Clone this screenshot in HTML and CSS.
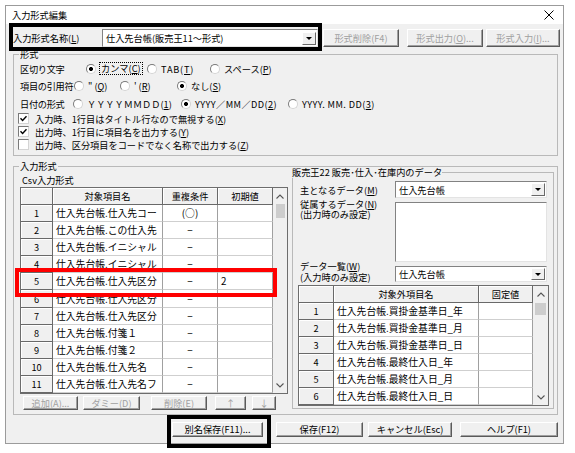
FILE: index.html
```html
<!DOCTYPE html>
<html lang="ja">
<head>
<meta charset="utf-8">
<title>入力形式編集</title>
<link rel="stylesheet" href="styles.css">
</head>
<body>
<div class="window">
  <div class="titlebar">
    <span class="title">入力形式編集</span>
    <svg class="close" width="10" height="10" viewBox="0 0 10 10"><path d="M0.5 0.5L9.5 9.5M9.5 0.5L0.5 9.5" stroke="#000" stroke-width="1" fill="none"/></svg>
  </div>
  <div class="client">
    <div class="toprow">
      <span class="name-lbl">入力形式名称(<u>L</u>)</span>
      <div class="combo main-combo"><span class="combo-text">仕入先台帳(販売王11〜形式)</span><span class="drop"><i class="tri"></i></span></div>
      <button class="btn dis b-del">形式削除(F4)</button>
      <button class="btn dis b-out">形式出力(<u>O</u>)...</button>
      <button class="btn dis b-in">形式入力(<u>I</u>)...</button>
    </div>

    <fieldset class="group g-format">
      <legend>形式</legend>
      <div class="frow r1">
        <span class="flabel w66">区切り文字</span>
        <span class="opt w61"><span class="radio on"></span><span class="focus">カンマ(<u>C</u>)</span></span>
        <span class="opt w63"><span class="radio"></span><span class="wide">TAB(<u>T</u>)</span></span>
        <span class="opt"><span class="radio"></span>スペース(<u>P</u>)</span>
      </div>
      <div class="frow r2">
        <span class="flabel w54">項目の引用符</span>
        <span class="opt w46"><span class="radio"></span>" (<u>Q</u>)</span>
        <span class="opt w57"><span class="radio"></span>' (<u>R</u>)</span>
        <span class="opt"><span class="radio on"></span>なし(<u>S</u>)</span>
      </div>
      <div class="frow r3">
        <span class="flabel w53">日付の形式</span>
        <span class="opt w108"><span class="radio"></span>ＹＹＹＹＭＭＤＤ(<u>1</u>)</span>
        <span class="opt w107"><span class="radio on"></span><span class="wide2">YYYY／MM／DD(<u>2</u>)</span></span>
        <span class="opt"><span class="radio"></span><span class="wide2">YYYY. MM. DD(<u>3</u>)</span></span>
      </div>
      <div class="cbrow"><span class="cb"><svg width="7" height="7" viewBox="0 0 7 7"><path d="M0.5 3.3L2.6 5.4L6.5 1.2" fill="none" stroke="#000" stroke-width="1.4"/></svg></span>入力時、1行目はタイトル行なので無視する(<u>X</u>)</div>
      <div class="cbrow"><span class="cb"><svg width="7" height="7" viewBox="0 0 7 7"><path d="M0.5 3.3L2.6 5.4L6.5 1.2" fill="none" stroke="#000" stroke-width="1.4"/></svg></span>出力時、1行目に項目名を出力する(<u>Y</u>)</div>
      <div class="cbrow last"><span class="cb"></span>出力時、区分項目をコードでなく名称で出力する(<u>Z</u>)</div>
    </fieldset>

    <fieldset class="group g-input">
      <legend>入力形式</legend>
      <div class="lower">
        <div class="leftcol">
          <div class="csv-lbl">Csv入力形式</div>
          <div class="grid lgrid">
            <div class="sb">
              <span class="sb-btn"><svg width="8" height="5" viewBox="0 0 8 5"><path d="M0.5 4.5L4 1L7.5 4.5" fill="none" stroke="#555" stroke-width="1.1"/></svg></span>
              <span class="thumb lthumb"></span>
              <span class="sb-fill"></span>
              <span class="sb-btn"><svg width="8" height="5" viewBox="0 0 8 5"><path d="M0.5 0.5L4 4L7.5 0.5" fill="none" stroke="#555" stroke-width="1.1"/></svg></span>
            </div>
            <div class="hc"></div><div class="hc">対象項目名</div><div class="hc">重複条件</div><div class="hc">初期値</div>
            <div class="rh">1</div><div class="dc">仕入先台帳.仕入先コー</div><div class="dc c">(○)</div><div class="dc"></div>
            <div class="rh">2</div><div class="dc">仕入先台帳.この仕入先</div><div class="dc c">−</div><div class="dc"></div>
            <div class="rh">3</div><div class="dc">仕入先台帳.イニシャル</div><div class="dc c">−</div><div class="dc"></div>
            <div class="rh">4</div><div class="dc">仕入先台帳.イニシャル</div><div class="dc c">−</div><div class="dc"></div>
            <div class="rh">5</div><div class="dc">仕入先台帳.仕入先区分</div><div class="dc c">−</div><div class="dc">2</div>
            <div class="rh">6</div><div class="dc">仕入先台帳.仕入先区分</div><div class="dc c">−</div><div class="dc"></div>
            <div class="rh">7</div><div class="dc">仕入先台帳.仕入先区分</div><div class="dc c">−</div><div class="dc"></div>
            <div class="rh">8</div><div class="dc">仕入先台帳.付箋１</div><div class="dc c">−</div><div class="dc"></div>
            <div class="rh">9</div><div class="dc">仕入先台帳.付箋２</div><div class="dc c">−</div><div class="dc"></div>
            <div class="rh">10</div><div class="dc">仕入先台帳.仕入先名</div><div class="dc c">−</div><div class="dc"></div>
            <div class="rh">11</div><div class="dc">仕入先台帳.仕入先名フ</div><div class="dc c">−</div><div class="dc"></div>
          </div>
          <div class="gbtns">
            <button class="btn dis g1">追加(<u>A</u>)...</button>
            <button class="btn dis g2">ダミー(<u>D</u>)</button>
            <button class="btn dis g3">削除(<u>E</u>)</button>
            <button class="btn dis g4">↑</button>
            <button class="btn dis g5">↓</button>
          </div>
        </div>

        <fieldset class="g-data">
          <legend>販売王22 販売･仕入･在庫内のデータ</legend>
          <div class="rowM">
            <span class="dlbl">主となるデータ(<u>M</u>)</span>
            <div class="combo rcombo"><span class="combo-text">仕入先台帳</span><span class="drop"><i class="tri"></i></span></div>
          </div>
          <div class="rowN">
            <span class="dlbl">従属するデータ(<u>N</u>)<br>(出力時のみ設定)</span>
            <div class="listbox"></div>
          </div>
          <div class="rowW">
            <span class="dlbl">データ一覧(<u>W</u>)<br>(入力時のみ設定)</span>
            <div class="combo rcombo"><span class="combo-text">仕入先台帳</span><span class="drop"><i class="tri"></i></span></div>
          </div>
          <div class="grid rgrid">
            <div class="sb">
              <span class="sb-btn"><svg width="8" height="5" viewBox="0 0 8 5"><path d="M0.5 4.5L4 1L7.5 4.5" fill="none" stroke="#555" stroke-width="1.1"/></svg></span>
              <span class="thumb rthumb"></span>
              <span class="sb-fill"></span>
              <span class="sb-btn"><svg width="8" height="5" viewBox="0 0 8 5"><path d="M0.5 0.5L4 4L7.5 0.5" fill="none" stroke="#555" stroke-width="1.1"/></svg></span>
            </div>
            <div class="hc"></div><div class="hc">対象外項目名</div><div class="hc">固定値</div>
            <div class="rh">1</div><div class="dc">仕入先台帳.買掛金基準日_年</div><div class="dc"></div>
            <div class="rh">2</div><div class="dc">仕入先台帳.買掛金基準日_月</div><div class="dc"></div>
            <div class="rh">3</div><div class="dc">仕入先台帳.買掛金基準日_日</div><div class="dc"></div>
            <div class="rh">4</div><div class="dc">仕入先台帳.最終仕入日_年</div><div class="dc"></div>
            <div class="rh">5</div><div class="dc">仕入先台帳.最終仕入日_月</div><div class="dc"></div>
            <div class="rh">6</div><div class="dc">仕入先台帳.最終仕入日_日</div><div class="dc"></div>
          </div>
        </fieldset>
      </div>
    </fieldset>

    <div class="footer">
      <button class="btn f1">別名保存(F11)...</button>
      <button class="btn f2">保存(F12)</button>
      <button class="btn f3">キャンセル(Esc)</button>
      <button class="btn f4">ヘルプ(F1)</button>
    </div>
  </div>
</div>

<div class="mark m1"></div>
<div class="mark m2"></div>
<div class="mark m3"></div>
</body>
</html>
```

FILE: styles.css
```css
* { box-sizing: border-box; }
html, body { margin: 0; padding: 0; }
body {
  position: relative;
  width: 575px;
  height: 453px;
  overflow: hidden;
  background: #fff;
  font-family: "Noto Sans CJK JP", "Noto Sans", sans-serif;
  font-size: 9.2px;
  color: #000;
}
u { text-decoration: underline; text-underline-offset: 1px; }

.window {
  margin: 5px 0 0 5px;
  width: 559px;
  height: 439px;
  border: 1px solid #9b9b9b;
  display: flex;
  flex-direction: column;
  background: #f0f0f0;
}
.titlebar {
  flex: none;
  height: 18px;
  background: #fff;
  display: flex;
  align-items: center;
  justify-content: space-between;
  padding: 0 9px 0 6px;
  line-height: 18px;
}
.close { display: block; }

.client { flex: 1; display: flex; flex-direction: column; }

.toprow {
  display: flex;
  align-items: center;
  height: 18px;
  margin-top: 5px;
  padding-left: 7px;
}
.name-lbl { width: 89px; flex: none; white-space: nowrap; }

.combo {
  display: flex;
  align-items: center;
  background: #fff;
  border: 1px solid;
  border-color: #828282 #e3e3e3 #e3e3e3 #828282;
  height: 18px;
  flex: none;
}
.main-combo { width: 216px; }
.combo-text { flex: 1; padding-left: 3px; white-space: nowrap; overflow: hidden; }
.drop {
  flex: none;
  width: 14px;
  height: 13px;
  margin-right: 1px;
  background: #f0f0f0;
  border: 1px solid;
  border-color: #fff #696969 #696969 #fff;
  display: flex;
  align-items: center;
  justify-content: center;
}
.tri {
  width: 0;
  height: 0;
  border-left: 3px solid transparent;
  border-right: 3px solid transparent;
  border-top: 3px solid #000;
}

.btn {
  display: block;
  flex: none;
  font: inherit;
  color: #000;
  background: #f0f0f0;
  border: 1px solid;
  border-color: #fff #5a5a5a #5a5a5a #fff;
  box-shadow: inset -1px -1px 0 #a0a0a0;
  padding: 0;
  margin: 0;
  white-space: nowrap;
  overflow: hidden;
  text-align: center;
}
.dis { color: #a0a0a0; }

.toprow .btn { height: 18px; line-height: 16px; }
.b-del { width: 76px; margin-left: 5px; }
.b-out { width: 76px; margin-left: 8px; }
.b-in { width: 74px; margin-left: 3px; }

.group {
  margin: 0 0 0 7px;
  padding: 0;
  border: 1px solid #b9b9b9;
  width: 545px;
  min-width: 0;
}
.group > legend {
  margin-left: 5px;
  padding: 0 1px;
  line-height: 12px;
  height: 12px;
}
.g-format { margin-top: 1px; }

.frow { display: flex; align-items: center; padding-left: 6px; white-space: nowrap; }
.r1 { height: 17px; }
.r2 { height: 18px; }
.r3 { height: 17px; }
.flabel { flex: none; letter-spacing: -0.3px; }
.opt { display: flex; align-items: center; flex: none; white-space: nowrap; }
.wide { letter-spacing: 0.8px; }
.wide2 { letter-spacing: 0.4px; }
.w66 { width: 66px; }
.w61 { width: 61px; }
.w63 { width: 63px; }
.w54 { width: 54px; }
.w46 { width: 46px; }
.w57 { width: 57px; }
.w53 { width: 53px; }
.w108 { width: 108px; }
.w107 { width: 107px; }

.radio {
  flex: none;
  width: 10px;
  height: 10px;
  border-radius: 50%;
  border: 1px solid;
  border-color: #7a7a7a #d4d4d4 #d4d4d4 #7a7a7a;
  background: #fff;
  margin-right: 4px;
}
.radio.on { background: radial-gradient(circle at center, #000 0, #000 1.7px, #fff 2.3px); }
.focus { outline: 1px dotted #000; outline-offset: 0; padding: 0 1px; line-height: 11px; }

.cbrow {
  display: flex;
  align-items: center;
  height: 13px;
  padding-left: 4px;
  white-space: nowrap;
}
.cbrow.last { margin-bottom: 4px; }
.cb {
  flex: none;
  width: 11px;
  height: 11px;
  border: 1px solid;
  border-color: #7a7a7a #d4d4d4 #d4d4d4 #7a7a7a;
  background: #fff;
  margin-right: 6px;
  display: flex;
  align-items: center;
  justify-content: center;
}
.cb svg { display: block; }

.g-input { margin-top: 4px; }

.lower { display: flex; align-items: flex-start; padding: 0 3px 4px 6px; }
.leftcol { width: 268px; margin-right: 4px; flex: none; }
.csv-lbl { margin-top: 2px; height: 13px; line-height: 13px; padding-left: 2px; }

.grid { display: grid; border: 1px solid #6d6d6d; background: #fff; }
.lgrid {
  width: 268px;
  grid-template-columns: 32px 110px 55px 55px 14px;
  grid-template-rows: 17px repeat(11, 17.1px);
}
.rgrid {
  width: 251px;
  margin: 3px 0 0 5px;
  grid-template-columns: 35px 145px 54px 15px;
  grid-template-rows: repeat(7, 17px);
}
.hc, .rh {
  background: #f0f0f0;
  border-right: 1px solid #696969;
  border-bottom: 1px solid #696969;
  box-shadow: inset 1px 1px 0 #fff;
  white-space: nowrap;
  overflow: hidden;
  display: flex;
  align-items: center;
  justify-content: center;
}
.dc {
  border-right: 1px solid #a0a0a0;
  border-bottom: 1px solid #cfcfcf;
  white-space: nowrap;
  overflow: hidden;
  padding-left: 3px;
  display: flex;
  align-items: center;
  font-size: 9.8px;
}
.dc.c { justify-content: center; padding-left: 0; }

.sb {
  grid-column: -2 / -1;
  grid-row: 1 / -1;
  background: #f0f0f0;
  display: flex;
  flex-direction: column;
}
.sb-btn { flex: none; height: 16px; display: flex; align-items: center; justify-content: center; }
.sb-btn svg { display: block; }
.thumb { flex: none; align-self: center; background: #cdcdcd; }
.lthumb { width: 9px; height: 14px; }
.rthumb { width: 11px; height: 12px; margin-top: 1px; }
.sb-fill { flex: 1; }

.gbtns { display: flex; margin-top: 2px; height: 14px; }
.gbtns .btn { height: 14px; line-height: 12px; }
.g1 { width: 55px; margin-left: 3px; }
.g2 { width: 57px; margin-left: 5px; }
.g3 { width: 56px; margin-left: 11px; }
.g4 { width: 31px; margin-left: 8px; }
.g5 { width: 24px; margin-left: 6px; }

.g-data {
  flex: none;
  width: 262px;
  margin: -6px 0 0 0;
  padding: 0 0 2px 0;
  border: 1px solid #b9b9b9;
  min-width: 0;
}
.g-data > legend { margin-left: -1px; padding: 0; line-height: 12px; height: 12px; }

.dlbl { flex: none; width: 95px; white-space: nowrap; }
.rcombo { width: 152px; }
.rowM { display: flex; align-items: center; height: 17px; margin-top: 3px; padding-left: 7px; }
.rowM .combo { height: 17px; }
.rowN { display: flex; align-items: flex-start; margin-top: 1px; padding-left: 7px; }
.rowN .dlbl { line-height: 10px; }
.listbox {
  flex: none;
  width: 152px;
  height: 60px;
  margin-top: 3px;
  background: #fff;
  border: 1px solid;
  border-color: #828282 #e3e3e3 #e3e3e3 #828282;
}
.rowW { display: flex; align-items: flex-start; padding-left: 7px; }
.rowW .dlbl { line-height: 10.5px; margin-top: -1px; }
.rowW .combo { margin-top: 4px; height: 16px; }
.rowW .drop { height: 12px; }

.footer { display: flex; margin-top: 7px; height: 15px; padding-left: 166px; }
.footer .btn { height: 15px; line-height: 13px; }
.f1 { width: 91px; }
.f2 { width: 87px; margin-left: 13px; }
.f3 { width: 84px; margin-left: 5px; }
.f4 { width: 98px; margin-left: 8px; }

.mark { position: absolute; pointer-events: none; }
.m1 { left: 9px; top: 23px; width: 313px; height: 28px; border: 4px solid #000; }
.m2 { left: 167px; top: 415px; width: 104px; height: 33px; border: 4px solid #000; }
.m3 { left: 15px; top: 268px; width: 262px; height: 29px; border: 4px solid #f00; }
```
